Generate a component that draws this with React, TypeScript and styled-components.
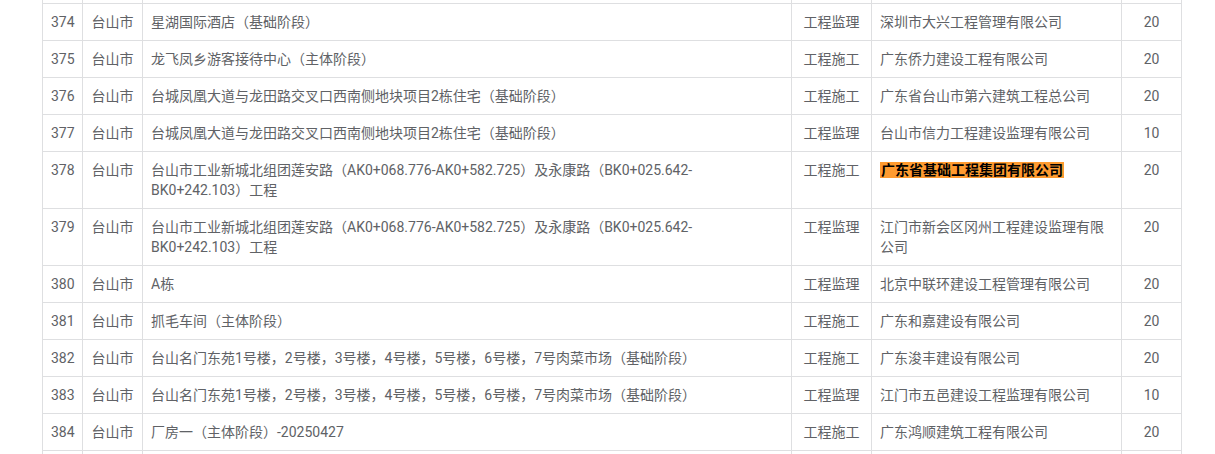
import styled, { createGlobalStyle } from 'styled-components';

const GlobalStyle = createGlobalStyle`
  html, body {
    margin: 0;
    padding: 0;
    background: #ffffff;
    overflow: hidden;
  }
  body {
    font-family: Roboto, "Noto Sans CJK SC", sans-serif;
  }
`

const Page = styled.div`
  width: 1215px;
  height: 454px;
  overflow: hidden;
`

const Table = styled.table`
  margin: -1px 0 0 42px;
  width: 1140px;
  border-collapse: collapse;
  table-layout: fixed;
  font-size: 14px;
  line-height: 20px;
  color: #606266;
`

const Col = styled.col<{ $w: number }>`
  width: ${props => props.$w}px;
`

const Cell = styled.td<{ $align?: 'left' | 'center' }>`
  border: 1px solid #dedfe1;
  padding: 8px 8px;
  vertical-align: top;
  text-align: ${props => props.$align || 'left'};
`

const FillerCell = styled.td`
  border: 1px solid #dedfe1;
  padding: 0;
  height: 3px;
`

const Highlight = styled.span`
  background: #ff9b30;
  color: #000000;
  font-weight: bold;
  padding: 0 1px;
`

type Row = {
  no: number;
  city: string;
  project: string;
  kind: string;
  company: string;
  score: number;
  hot?: boolean;
}

const widths = [40, 60, 649, 80, 250, 60]

const rows: Row[] = [
  { no: 374, city: '台山市', project: '星湖国际酒店（基础阶段）', kind: '工程监理', company: '深圳市大兴工程管理有限公司', score: 20 },
  { no: 375, city: '台山市', project: '龙飞凤乡游客接待中心（主体阶段）', kind: '工程施工', company: '广东侨力建设工程有限公司', score: 20 },
  { no: 376, city: '台山市', project: '台城凤凰大道与龙田路交叉口西南侧地块项目2栋住宅（基础阶段）', kind: '工程施工', company: '广东省台山市第六建筑工程总公司', score: 20 },
  { no: 377, city: '台山市', project: '台城凤凰大道与龙田路交叉口西南侧地块项目2栋住宅（基础阶段）', kind: '工程监理', company: '台山市信力工程建设监理有限公司', score: 10 },
  { no: 378, city: '台山市', project: '台山市工业新城北组团莲安路（AK0+068.776-AK0+582.725）及永康路（BK0+025.642-BK0+242.103）工程', kind: '工程施工', company: '广东省基础工程集团有限公司', score: 20, hot: true },
  { no: 379, city: '台山市', project: '台山市工业新城北组团莲安路（AK0+068.776-AK0+582.725）及永康路（BK0+025.642-BK0+242.103）工程', kind: '工程监理', company: '江门市新会区冈州工程建设监理有限公司', score: 20 },
  { no: 380, city: '台山市', project: 'A栋', kind: '工程监理', company: '北京中联环建设工程管理有限公司', score: 20 },
  { no: 381, city: '台山市', project: '抓毛车间（主体阶段）', kind: '工程施工', company: '广东和嘉建设有限公司', score: 20 },
  { no: 382, city: '台山市', project: '台山名门东苑1号楼，2号楼，3号楼，4号楼，5号楼，6号楼，7号肉菜市场（基础阶段）', kind: '工程施工', company: '广东浚丰建设有限公司', score: 20 },
  { no: 383, city: '台山市', project: '台山名门东苑1号楼，2号楼，3号楼，4号楼，5号楼，6号楼，7号肉菜市场（基础阶段）', kind: '工程监理', company: '江门市五邑建设工程监理有限公司', score: 10 },
  { no: 384, city: '台山市', project: '厂房一（主体阶段）-20250427', kind: '工程施工', company: '广东鸿顺建筑工程有限公司', score: 20 },
]

function FillerRow() {
  return (
    <tr>
      {widths.map((w, i) => <FillerCell key={i} />)}
    </tr>
  );
}

export default function App() {
  return (
    <Page>
      <GlobalStyle />
      <Table>
        <colgroup>
          {widths.map((w, i) => <Col key={i} $w={w} />)}
        </colgroup>
        <tbody>
          <FillerRow />
          {rows.map(r => (
            <tr key={r.no}>
              <Cell $align="center">{r.no}</Cell>
              <Cell $align="center">{r.city}</Cell>
              <Cell>{r.project}</Cell>
              <Cell $align="center">{r.kind}</Cell>
              <Cell>{r.hot ? <Highlight>{r.company}</Highlight> : r.company}</Cell>
              <Cell $align="center">{r.score}</Cell>
            </tr>
          ))}
          <FillerRow />
        </tbody>
      </Table>
    </Page>
  );
}
